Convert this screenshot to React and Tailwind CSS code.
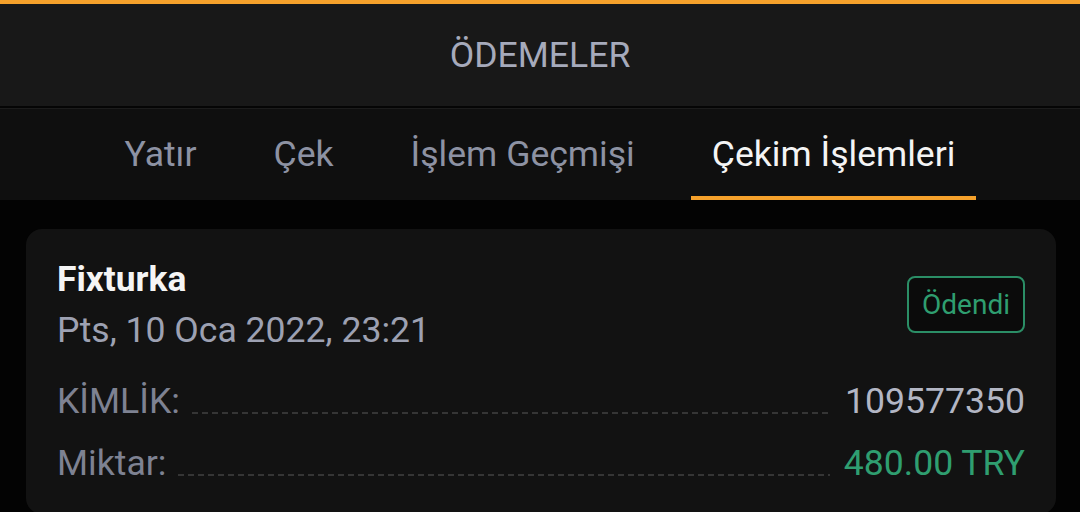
export default function App() {
  const tabs = ["Yatır", "Çek", "İşlem Geçmişi", "Çekim İşlemleri"];
  const dash =
    "flex-1 ml-[12px] mr-[14px] mb-[8px] h-[2px] bg-[linear-gradient(to_right,#353535_6px,transparent_6px)] bg-[length:10px_2px] bg-repeat-x";
  return (
    <div className="w-[1080px] h-[512px] overflow-hidden bg-[#030303] font-['Roboto',sans-serif]">
      <div className="h-[4px] bg-[#f5a12b]" />
      <div className="h-[104px] bg-[#181818] flex items-center justify-center border-b-2 border-[#050505]">
        <span className="text-[35.6px] leading-[42px] text-[#a6aabb]">ÖDEMELER</span>
      </div>
      <div className="h-[92px] bg-[#0f0f0f] border-t border-[#1c1c1c] flex justify-center gap-[35px]">
        {tabs.map((t, i) => (
          <div
            key={t}
            className={
              "px-[21px] flex items-center pt-[2px] text-[35.6px] leading-[42px] border-b-4 " +
              (i === 3 ? "text-[#f4f4f4] border-[#f5a12b]" : "text-[#8d92a3] border-transparent")
            }
          >
            {t}
          </div>
        ))}
      </div>
      <div className="pl-[26px] pr-[24px] pt-[29px]">
        <div className="bg-[#121212] rounded-[16px] px-[31px] pt-[29px] pb-[30px]">
          <div className="flex items-center justify-between">
            <div className="flex flex-col">
              <span className="text-[35.4px] leading-[42px] font-bold text-[#f5f5f5]">Fixturka</span>
              <span className="text-[35.6px] leading-[42px] mt-[9px] text-[#9da1b2]">Pts, 10 Oca 2022, 23:21</span>
            </div>
            <div className="w-[118px] h-[57px] rounded-[8px] border-2 border-[#2b8e66] bg-[#0b0b0b] flex items-center justify-center text-[28px] text-[#2f9e70]">
              Ödendi
            </div>
          </div>
          <div className="mt-[29px] flex items-end">
            <span className="text-[35.6px] leading-[42px] text-[#7e8292]">KİMLİK:</span>
            <div className={dash} />
            <span className="text-[35.6px] leading-[42px] text-[#b3b6c4]">109577350</span>
          </div>
          <div className="mt-[20px] flex items-end">
            <span className="text-[35.6px] leading-[42px] text-[#7e8292]">Miktar:</span>
            <div className={dash} />
            <span className="text-[35.6px] leading-[42px] text-[#2f9e70]">480.00 TRY</span>
          </div>
        </div>
      </div>
    </div>
  );
}
